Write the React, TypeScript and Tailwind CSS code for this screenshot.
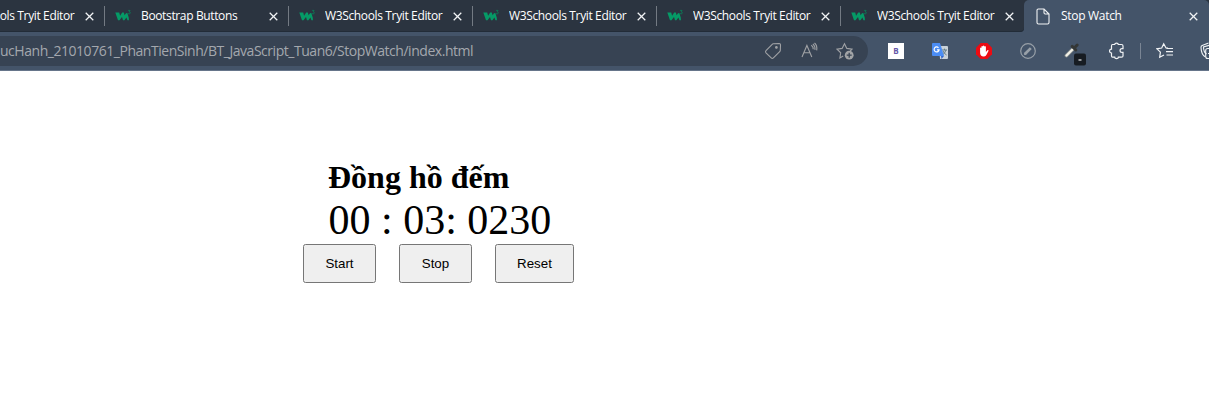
import React from "react";

function CloseIcon() {
  return (
    <svg className="h-[9px] w-[9px] shrink-0" viewBox="0 0 9 9" fill="none" stroke="#f1f3f5" strokeWidth="1.25">
      <path d="M0.7 0.7 8.3 8.3M8.3 0.7 0.7 8.3" />
    </svg>
  );
}

function SchoolIcon() {
  return (
    <svg className="h-4 w-[17px] shrink-0" viewBox="0 0 17 16" fill="none">
      <path d="M0.3 4.4H4.2L5.1 7.7 7.2 4.4H8.8L9.6 7.2 11 5.2 12.3 5 13.8 9.8 13.9 12.3H12.5L11.4 9.6 9.4 12.3H8L7 9 4.5 12.3H3Z" fill="#059a66" />
      <path d="M13.1 2.4H15.1L14.2 3.8C15.9 3.9 15.6 5.9 14.2 5.9L13 5.6" stroke="#078258" strokeWidth="0.8" />
    </svg>
  );
}

function Tab({ title }: { title: string }) {
  return (
    <div className="flex h-8 w-[184px] shrink-0 items-center">
      <span className="h-5 w-px bg-[#737a83]" />
      <span className="ml-[10px] flex">
        <SchoolIcon />
      </span>
      <span className="ml-[9px] w-[128px] overflow-hidden whitespace-nowrap text-[12px] leading-8 tracking-[-0.36px] text-white">{title}</span>
      <CloseIcon />
    </div>
  );
}

const buttonClass =
  "h-[39px] rounded-[2.5px] border border-[#767676] bg-[#efefef] text-center font-['Liberation_Sans',Arial,sans-serif] text-[13.333px] leading-[15px] text-black";

export default function App() {
  return (
    <div className="h-[414px] w-[1209px] overflow-hidden bg-white font-['Open_Sans','Noto_Sans',sans-serif]">
      <header className="h-[71px] border-b border-[#66758a] bg-[#445469]">
        <div className="flex h-8 bg-[#445469]">
          <div className="flex w-[1024px] justify-end overflow-hidden rounded-br-[4px] bg-[#2b3440] shadow-[inset_0_-1px_0_#222c38]">
            <Tab title="W3Schools Tryit Editor" />
            <Tab title="Bootstrap Buttons" />
            <Tab title="W3Schools Tryit Editor" />
            <Tab title="W3Schools Tryit Editor" />
            <Tab title="W3Schools Tryit Editor" />
            <Tab title="W3Schools Tryit Editor" />
          </div>
          <div className="flex w-[185px] bg-[#2b3440]">
            <div className="flex w-full items-center rounded-t-[5px] bg-[#445469] pl-[12px]">
              <svg className="h-[17px] w-[14px]" viewBox="0 0 14 17" fill="none" stroke="#f1f3f5" strokeWidth="1.1">
                <path d="M2.3 1H8L13 6V14.5Q13 16 11.5 16H2.5Q1 16 1 14.5V2.3Q1 1 2.3 1ZM8 1V4.8Q8 6 9.2 6H13" />
              </svg>
              <span className="ml-[11px] w-[128px] whitespace-nowrap text-[12px] leading-8 tracking-[-0.3px] text-white">Stop Watch</span>
              <CloseIcon />
            </div>
          </div>
        </div>
        <div className="flex h-[38px] items-center">
          <div className="flex h-[30px] w-[868px] shrink-0 items-center rounded-r-full bg-[#374353]">
            <span className="w-[764px] whitespace-nowrap text-[14px] leading-[30px] tracking-[-0.465px] text-[#a4a8ae]">
              ucHanh_21010761_PhanTienSinh/BT_JavaScript_Tuan6/StopWatch/index.html
            </span>
            <svg className="h-[18px] w-[18px]" viewBox="0 0 18 18" fill="none" stroke="#a0a2a5" strokeWidth="1.1">
              <path d="M9.2 1.7 15.2 1.5Q16.5 1.5 16.5 2.8L16.3 8.3Q16.3 9 15.7 9.6L9.4 15.9Q8.3 17 7.2 15.9L2 10.8Q1 9.7 2 8.6L8.2 2.3Q8.7 1.8 9.2 1.7Z" />
              <circle cx="12.4" cy="5.4" r="0.8" fill="#a0a2a5" />
            </svg>
            <svg className="ml-[19px] h-[18px] w-[18px]" viewBox="0 0 18 18" fill="none" stroke="#a0a2a5" strokeWidth="1.1">
              <path d="M1 15 5.9 3.5 10.8 15M2.9 10.8H9M10.3 3.2Q12.5 4.8 12.2 7.3M11.9 1.8Q14.5 4.2 13.9 7.8M13.5 1Q16.5 3.5 15.7 8.4" />
            </svg>
            <svg className="ml-[17px] h-[19px] w-[19px]" viewBox="0 0 19 19" fill="none" stroke="#a0a2a5" strokeWidth="1.1">
              <path d="M7.2 14.1 3.9 16 4.7 10.8 1 7.2 6.1 6.4 8.5 1.8 10.8 6.4 16 7.2 14.2 9" />
              <circle cx="13.2" cy="13.2" r="4.4" fill="#a2a4a6" stroke="none" />
              <path d="M13.2 10.7V15.7M10.7 13.2H15.7" stroke="#374353" strokeWidth="1.3" />
            </svg>
          </div>
          <div className="ml-[20px] flex h-4 w-4 shrink-0 items-center justify-center bg-white text-[8px] font-bold leading-4 text-[#6658a8]">B</div>
          <svg className="ml-[28px] h-4 w-4 shrink-0" viewBox="0 0 16 16">
            <path d="M7 3H15Q16 3 16 4V15Q16 16 15 16H8Z" fill="#c9d1d8" />
            <path d="M10 7H15M12.5 5.7V7M14 7Q13 10 10.5 12M11 8Q12 10.5 14.6 12" fill="none" stroke="#637b84" />
            <path d="M1 0H8L12 13H1Q0 13 0 12V1Q0 0 1 0Z" fill="#4b8df5" />
            <path d="M9 13H12L9.5 16Z" fill="#3468c9" />
            <path d="M6.5 4.8A2.5 2.5 0 1 0 7.1 6.8H5" fill="none" stroke="white" strokeWidth="1.2" />
          </svg>
          <svg className="ml-[28px] h-4 w-4 shrink-0" viewBox="0 0 16 16">
            <path d="M4.7 0H11.3L16 4.7V11.3L11.3 16H4.7L0 11.3V4.7Z" fill="#ed0b12" />
            <path d="M4.1 8V5Q4.7 4.2 5.4 5V8 3.4Q6.1 2.6 6.8 3.4V7.6 2.9Q7.6 2 8.4 2.9V7.6 3.6Q9.2 2.8 9.9 3.6V9L11.4 7.2Q12.4 6.8 12.6 7.7L10.5 11.8Q9.7 13.7 7.7 13.5 4.1 13.4 4.1 9.8Z" fill="white" />
          </svg>
          <svg className="ml-[28px] h-4 w-4 shrink-0" viewBox="0 0 16 16" fill="none" stroke="#98a0a8">
            <circle cx="8" cy="8" r="7.3" strokeWidth="1.2" />
            <path d="M4.7 11.2 10.8 5.1" strokeWidth="2.7" />
            <path d="M4.4 11.6 5.3 9.6 6.5 10.8Z" fill="#98a0a8" />
          </svg>
          <svg className="ml-[28px] mt-[5px] h-6 w-[22px] shrink-0" viewBox="0 0 22 24" fill="none">
            <path d="M2.5 13.5 9 7" stroke="#8b918f" strokeWidth="3.8" strokeLinecap="round" />
            <path d="M2.5 13.5 9 7" stroke="#f3f2e9" strokeWidth="2.2" strokeLinecap="round" />
            <path d="M8.2 4.4 11.8 8M10 6.2 13.2 3" stroke="#343736" strokeWidth="3" strokeLinecap="round" />
            <rect x="10" y="11.5" width="12" height="12" rx="2" fill="#171c22" />
            <path d="M14.5 18H17.5" stroke="white" strokeWidth="1.1" />
          </svg>
          <svg className="ml-[22px] h-[18px] w-[18px] shrink-0" viewBox="0 0 18 18" fill="none" stroke="#f1f3f5" strokeWidth="1.2">
            <path d="M4.5 2.5H6.7C6.7 0.6 10.3 0.6 10.3 2.5H13.5Q15 2.5 15 4V6.6H14C11.4 6.6 11.4 10.4 14 10.4H15V14Q15 15.2 13.5 15.2H10.4C10.4 17 6.7 17 6.7 15.2H4.5Q3.5 15.2 3.5 14V11C0.9 11 0.9 7.2 3.5 7.2V4Q3.5 2.5 4.5 2.5Z" />
          </svg>
          <span className="ml-[14px] h-4 w-px shrink-0 bg-[#7a8594]" />
          <svg className="ml-[15px] h-[18px] w-[18px] shrink-0" viewBox="0 0 18 18" fill="none" stroke="#f1f3f5" strokeWidth="1.2">
            <path d="M12 6H10L7.7 1.8 5.7 6 1 6.8 4.4 10.2 3.7 15.2 8 13M10.5 6.5H17M10 9.7H17M10.5 13H17" />
          </svg>
          <svg className="ml-[26px] h-[18px] w-[20px] shrink-0" viewBox="0 0 20 18" fill="none" stroke="#f1f3f5" strokeWidth="1.1">
            <path d="M5.2 14.8Q1.2 12.5 1 5.2 1 4 2.2 3.5L8.5 1M6.5 12Q3.5 10 3.5 5L10 3" />
            <rect x="5.7" y="6.5" width="12" height="10" rx="2" />
            <path d="M8 11.5H14M11 8.5V14.5" />
          </svg>
        </div>
      </header>
      <main className="pl-[303px] pt-[88px]">
        <h1 className="mb-px pl-[25px] font-['Liberation_Serif','Times_New_Roman',serif] text-[32px] font-bold leading-[36px] text-black">Đồng hồ đếm</h1>
        <p className="pl-[25.5px] font-['Liberation_Serif','Times_New_Roman',serif] text-[42px] leading-[48px] text-black">00 : 03: 0230</p>
        <div className="flex gap-[23px]">
          <button className={`${buttonClass} w-[73px]`}>Start</button>
          <button className={`${buttonClass} w-[73px]`}>Stop</button>
          <button className={`${buttonClass} w-[79px]`}>Reset</button>
        </div>
      </main>
    </div>
  );
}
